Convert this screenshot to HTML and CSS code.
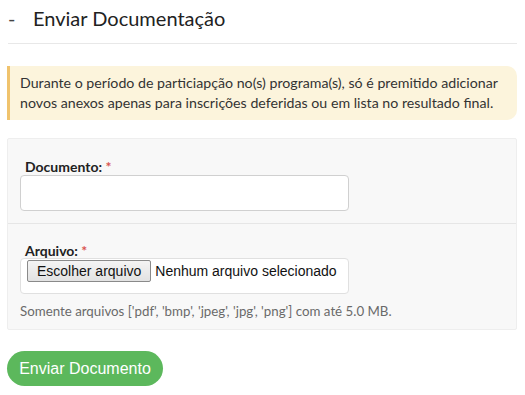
FILE: index.html
```html
<!DOCTYPE html>
<html lang="pt-BR">
<head>
    <meta charset="UTF-8">
    <meta name="viewport" content="width=device-width, initial-scale=1.0">
    <title>Enviar Documentação</title>
    <link rel="stylesheet" href="styles.css">
</head>
<body>
    <div class="page">
        <h2 class="page-title"><span class="dash">-</span>Enviar Documentação</h2>

        <div class="alert-warning">
            Durante o período de particiapção no(s) programa(s), só é premitido adicionar novos anexos apenas para inscrições deferidas ou em lista no resultado final.
        </div>

        <form class="doc-form">
            <div class="form-panel">
                <div class="form-group">
                    <label for="documento">Documento: <span class="req">*</span></label>
                    <input type="text" id="documento" class="form-control">
                </div>
                <div class="form-group">
                    <label for="arquivo">Arquivo: <span class="req">*</span></label>
                    <div class="file-box">
                        <input type="file" id="arquivo" class="file-hidden">
                        <label for="arquivo" class="file-btn">Escolher arquivo</label>
                        <span class="file-name">Nenhum arquivo selecionado</span>
                    </div>
                    <p class="help-text">Somente arquivos ['pdf', 'bmp', 'jpeg', 'jpg', 'png'] com até 5.0 MB.</p>
                </div>
            </div>
            <button type="submit" class="btn-success">Enviar Documento</button>
        </form>
    </div>
</body>
</html>
```

FILE: styles.css
```css
* {
    margin: 0;
    padding: 0;
    box-sizing: border-box;
}

body {
    font-family: 'Lato', sans-serif;
    color: #222;
    background: #fff;
    padding: 0 8px 0 7px;
}

.page-title {
    font-size: 20px;
    font-weight: 400;
    line-height: 26px;
    padding: 5px 0 12px 0;
    border-bottom: 1px solid #e8e8e8;
    margin-left: 1px;
    margin-bottom: 22px;
}

.dash {
    display: inline-block;
    width: 25px;
    color: #444;
}

.alert-warning {
    background: #fcf4dc;
    border-left: 3px solid #f0c36d;
    border-radius: 0 10px 10px 0;
    padding: 7px 4px 7px 10px;
    font-size: 14.2px;
    line-height: 20px;
    color: #333;
    margin-bottom: 18px;
}

.form-panel {
    background: #f8f8f8;
    border: 1px solid #eeeeee;
    border-radius: 2px;
}

.form-group {
    padding: 19px 12px 12px 12px;
}

.form-group + .form-group {
    border-top: 1px solid #e6e6e6;
    padding-top: 18px;
    padding-bottom: 10px;
}

.form-group > label {
    display: block;
    padding-left: 5px;
    font-weight: 700;
    font-size: 14px;
    line-height: 17px;
    color: #222;
}

.form-group + .form-group > label {
    margin-bottom: -1px;
}

.req {
    color: #d9534f;
    font-weight: 700;
}

.form-control {
    display: block;
    width: 329px;
    height: 36px;
    background: #fff;
    border: 1px solid #d0d0d0;
    border-radius: 4px;
    font-size: 14px;
}

.file-box {
    display: flex;
    align-items: flex-start;
    gap: 4px;
    width: 329px;
    height: 36px;
    background: #fff;
    border: 1px solid #e0e0e0;
    border-radius: 4px;
    padding: 1px 0 0 6px;
    font-family: 'Liberation Sans', Arial, sans-serif;
    font-size: 14px;
    color: #111;
    white-space: nowrap;
    overflow: hidden;
}

.file-hidden {
    display: none;
}

.file-btn {
    display: block;
    flex-shrink: 0;
    height: 22px;
    line-height: 20px;
    padding: 0 9px;
    background: linear-gradient(#f4f4f4, #e2e2e2);
    border: 1px solid #8a8a8a;
    border-radius: 2px;
    color: #111;
    cursor: pointer;
}

.file-name {
    flex-shrink: 0;
    line-height: 22px;
}

.help-text {
    font-size: 13.3px;
    color: #6a6a6a;
    margin-top: 9px;
    line-height: 16px;
}

.btn-success {
    margin-top: 21px;
    background: #5cb85c;
    color: #fff;
    border: none;
    border-radius: 18px;
    font-family: 'Liberation Sans', Arial, sans-serif;
    font-size: 16px;
    width: 156px;
    height: 35px;
    cursor: pointer;
}
```
